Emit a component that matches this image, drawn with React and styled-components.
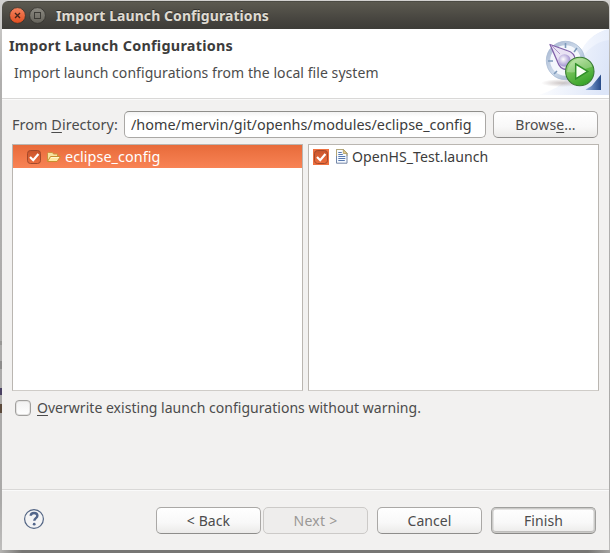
import React from 'react';
import styled, { createGlobalStyle } from 'styled-components';

const GlobalStyle = createGlobalStyle`
  * { box-sizing: border-box; }
  body {
    margin: 0;
    overflow: hidden;
    font: 14px "Noto Sans", sans-serif;
    color: #4c4c4c;
  }
  button, input { font: inherit; color: inherit; }
`;

const Desktop = styled.div`
  position: relative;
  width: 610px;
  height: 553px;
  padding: 1px 1px 3px 2px;
  overflow: hidden;
  background:
    linear-gradient(90deg, #b4b3b1 0, #777674 22px, #777674 588px, #a5a4a2) 0 550px / 610px 3px no-repeat,
    linear-gradient(#d3d2d0, #b0afae 80px, #aaa9a8 500px, #c0bfbe);
`;

/* Fragments of the window behind, visible past the dialog's left edge. */
const Behind = styled.div`
  position: absolute;
  left: 0;
  top: ${(p) => p.$y}px;
  width: 2px;
  height: ${(p) => p.$h}px;
  background: ${(p) => p.$color};
`;

const Dialog = styled.div`
  display: flex;
  flex-direction: column;
  height: 549px;
  background: #f2f1f0;
  border-radius: 6px 6px 0 0;
  overflow: hidden;
`;

const TitleBar = styled.header`
  display: flex;
  align-items: center;
  flex: none;
  height: 28px;
  padding-left: 7px;
  background: linear-gradient(#5c5a50, #45433e 70%, #3d3c38);
  border-top: 1px solid #4c4b44;
`;

const TitleText = styled.h1`
  margin: 0 0 0 7px;
  font-size: 14px;
  line-height: 26px;
  letter-spacing: 0.07px;
  color: #dfdbd2;
  text-shadow: 0 -1px 0 #33322e;
`;

const WindowButton = styled.button`
  display: flex;
  padding: 0;
  margin: 0 3px 0 0;
  border: 0;
  background: none;
`;

const Banner = styled.section`
  display: flex;
  justify-content: space-between;
  flex: none;
  height: 69px;
  background: #fff;
`;

const BannerText = styled.div`
  padding: 6px 0 0 7px;
`;

const BannerTitle = styled.h2`
  margin: 0;
  font-size: 14.4px;
  line-height: 22px;
  letter-spacing: 0.26px;
  color: #3c3c3c;
`;

const BannerMessage = styled.p`
  margin: 6px 0 0 5px;
  line-height: 20px;
  letter-spacing: 0.065px;
`;

const Separator = styled.div`
  flex: none;
  height: 2px;
  background: linear-gradient(#d9d8d7 50%, #fafafa 50%);
`;

const Content = styled.main`
  flex: 1;
  padding: 11px 10px 0;
`;

const DirectoryRow = styled.div`
  display: flex;
  height: 28px;
`;

const DirectoryLabel = styled.label`
  width: 112px;
  font-size: 14.4px;
  line-height: 28px;
  letter-spacing: 0.06px;
  white-space: nowrap;
`;

const Mnemonic = styled.span`
  text-decoration: underline;
  text-decoration-thickness: 1px;
  text-underline-offset: 2px;
  text-decoration-skip-ink: none;
`;

const DirectoryInput = styled.input`
  width: 362px;
  height: 27px;
  margin-right: 7px;
  padding: 0 6px;
  border: 1px solid #aaa8a5;
  border-top-color: #8f8e8b;
  border-radius: 5px;
  background: linear-gradient(#f3f3f3, #fff 5px);
  font-size: 14.4px;
  letter-spacing: 0.01px;
  color: #3c3c3c;
  outline: none;
`;

const Button = styled.button`
  flex: none;
  width: 105px;
  height: 27px;
  padding: 0;
  border: 1px solid #aaa8a6;
  border-bottom-color: #8e8d8b;
  border-radius: 5px;
  background: linear-gradient(#fff, #f8f8f8 60%, #ebeae9);
  line-height: 25px;
  letter-spacing: 0.08px;
  white-space: pre;

  &:disabled {
    color: #9a9896;
    border-color: #cccac8;
    background: #eeedec;
    letter-spacing: 0.25px;
  }
`;

const DefaultButton = styled(Button)`
  border-color: #a0a09e;
  border-bottom-color: #8a8987;
  box-shadow: inset 0 0 0 1.5px #cbcac8, inset 0 -2px 0 #b1b0ae;
`;

const Lists = styled.div`
  display: flex;
  gap: 5px;
  margin-top: 5px;
`;

const List = styled.div`
  width: 291px;
  height: 247px;
  border: 1px solid #bab6b1;
  border-bottom-color: #cfccc8;
  background: #fff;
`;

const ListItem = styled.div`
  display: flex;
  align-items: center;
  height: 23px;
  padding-left: ${(p) => p.$indent}px;
  color: ${(p) => (p.$selected ? '#fff' : '#3c3c3c')};
  background: ${(p) => (p.$selected ? 'linear-gradient(#e86b3a, #f88355)' : 'none')};
`;

const ItemIcon = styled.span`
  display: flex;
  justify-content: flex-end;
  flex: none;
  width: ${(p) => p.$width}px;
  margin-right: ${(p) => p.$gap}px;
`;

const ItemText = styled.span`
  font-size: ${(p) => p.$size}px;
  line-height: 23px;
  letter-spacing: 0.04px;
`;

const CheckBox = styled.span`
  display: flex;
  flex: none;
  width: 16px;
  height: 16px;
  background: ${(p) => (p.$tinted ? '#ef7140' : 'none')};
`;

const OverwriteRow = styled.label`
  display: flex;
  gap: 6px;
  height: 24px;
  margin-top: 5px;
  padding-left: 3px;
  line-height: 23px;
  letter-spacing: 0.025px;
  white-space: nowrap;
`;

const EmptyBox = styled.span`
  width: 16px;
  height: 16px;
  margin-top: 4px;
  border: 1px solid #a09f9d;
  border-radius: 4px;
  background: linear-gradient(#f1f1f1, #fff);
  box-shadow: inset 0 0 0 1px #e4e3e2;
`;

const Footer = styled.footer`
  display: flex;
  flex: none;
  height: 59px;
  padding: 16px 12px 0 21px;
`;

const HelpButton = styled.button`
  display: flex;
  width: 22px;
  height: 22px;
  margin: 1px 111px 0 0;
  padding: 0;
  border: 0;
  background: none;
`;

const NavButtons = styled.div`
  display: flex;
  gap: 2px;
  margin-right: 9px;
`;

const EndButtons = styled.div`
  display: flex;
  gap: 9px;
`;

function CloseIcon() {
  return (
    <svg width="17" height="17" viewBox="0 0 17 17">
      <defs>
        <linearGradient id="close" x2="0" y2="1">
          <stop stopColor="#f58560" />
          <stop offset="1" stopColor="#e14d1f" />
        </linearGradient>
      </defs>
      <circle cx="8.5" cy="8.5" r="7.9" fill="url(#close)" stroke="#34322d" strokeWidth=".8" />
      <path d="M6 6l5 5M11 6l-5 5" stroke="#46251a" strokeWidth="1.4" />
    </svg>
  );
}

function MaximizeIcon() {
  return (
    <svg width="17" height="17" viewBox="0 0 17 17">
      <defs>
        <linearGradient id="max" x2="0" y2="1">
          <stop stopColor="#8c8a82" />
          <stop offset="1" stopColor="#65635b" />
        </linearGradient>
      </defs>
      <circle cx="8.5" cy="8.5" r="7.9" fill="url(#max)" stroke="#35342f" strokeWidth=".8" />
      <rect x="5.5" y="5.5" width="6" height="6" fill="none" stroke="#3b3a35" />
    </svg>
  );
}

function CheckIcon() {
  return (
    <svg width="16" height="16" viewBox="0 0 16 16">
      <defs>
        <linearGradient id="check" x2="0" y2="1">
          <stop stopColor="#c8542c" />
          <stop offset="1" stopColor="#ed6d3d" />
        </linearGradient>
      </defs>
      <rect x="1.5" y="1.5" width="13" height="13" rx="3" fill="url(#check)" stroke="#a2492b" />
      <path d="M4 8l3.2 3.2L12.4 5" fill="none" stroke="#fff" strokeWidth="2.2" />
    </svg>
  );
}

function FolderIcon() {
  return (
    <svg width="16" height="16" viewBox="0 0 16 16">
      <path d="M1.5 12.500v-8l1-1h4l1 1.500h4v3" fill="#f7e3a0" stroke="#c9953c" />
      <path d="M1.5 12.500l3-5h10l-3.500 5z" fill="#ffe9a2" stroke="#c98d2f" strokeLinejoin="round" />
      <path d="M5 8.500h8" stroke="#fff7cf" />
    </svg>
  );
}

function FileIcon() {
  return (
    <svg width="12" height="15" viewBox="0 0 12 15">
      <path d="M.5.5h7l3.5 3.7v10H.5z" fill="#f5faff" stroke="#7486a6" />
      <path d="M.5 7V.5h7l3.5 3.7V7" fill="none" stroke="#b6a777" />
      <path d="M7.3.8v3.7H11z" fill="#e4cb8c" stroke="#b19c61" strokeWidth=".8" />
      <path d="M2.3 3.5h3.5M2.3 5.5h4.5M2.3 7.5h7M2.3 9.5h7M2.3 11.5h6.5" stroke="#5778af" />
    </svg>
  );
}

function HelpIcon() {
  return (
    <svg width="22" height="22" viewBox="0 0 22 22">
      <circle cx="11" cy="11" r="9.4" fill="#f4f4f5" stroke="#536584" strokeWidth="1.2" />
      <path
        d="M7.7 7.8C7.8 5.8 9.1 5 11 5c2 0 3.4 1 3.4 2.7 0 2.4-3.1 2.6-3.1 5.1"
        fill="none"
        stroke="#52658a"
        strokeWidth="2.4"
      />
      <circle cx="11.2" cy="16.2" r="1.4" fill="#52658a" />
    </svg>
  );
}

function BannerArt() {
  return (
    <svg width="75" height="66" viewBox="534 29 75 66">
      <defs>
        <linearGradient id="sky" x1="0" y1=".4" x2="1" y2=".6">
          <stop stopColor="#fff" />
          <stop offset="1" stopColor="#dce5f8" />
        </linearGradient>
        <linearGradient id="sweep" x1="0" x2="1">
          <stop stopColor="#f5f8fe" />
          <stop offset="1" stopColor="#e8eefb" />
        </linearGradient>
        <linearGradient id="ring" x2="1" y2="1">
          <stop stopColor="#a7b6d0" />
          <stop offset=".5" stopColor="#cedbeb" />
          <stop offset="1" stopColor="#8fa5c3" />
        </linearGradient>
        <radialGradient id="orb" cx=".4" cy=".4">
          <stop stopColor="#fff" />
          <stop offset="1" stopColor="#aea0d6" />
        </radialGradient>
        <linearGradient id="green" x2=".5" y2="1">
          <stop stopColor="#c1e7a9" />
          <stop offset=".5" stopColor="#6fbf53" />
          <stop offset="1" stopColor="#3aa62c" />
        </linearGradient>
        <linearGradient id="corner" x1="0" x2="1">
          <stop stopColor="#9bb6df" />
          <stop offset=".55" stopColor="#5578b1" />
          <stop offset="1" stopColor="#264a89" />
        </linearGradient>
        <radialGradient id="shade">
          <stop stopColor="#a99d9d" stopOpacity=".6" />
          <stop offset="1" stopColor="#a99d9d" stopOpacity="0" />
        </radialGradient>
      </defs>
      <path d="M609 29v66h-70c21-7 34-17 40-36 5-17 14-26 30-30z" fill="url(#sky)" />
      <path d="M609 29v11c-14 2-23 10-30 23 0-17 13-29 30-34z" fill="url(#sweep)" />
      <ellipse cx="562" cy="83" rx="21" ry="4" fill="url(#shade)" />
      <circle cx="565.5" cy="60.5" r="17.3" fill="#f4f7fc" stroke="url(#ring)" strokeWidth="4" />
      <circle cx="565.5" cy="60.5" r="19.2" fill="none" stroke="#a9bad2" strokeWidth=".7" />
      <path
        d="M565.5 43v5M577 48l-3 4M548 61h5M554 74l3-3M583 61h-4"
        stroke="#7e9abb"
        strokeWidth="1.6"
      />
      <path
        d="M550 44.5l17 6c5 1.5 8 4 8 9 0 6-4 10-9 10-4 0-7-3-9-9z"
        fill="#e9e3f4"
        stroke="#8060a8"
        strokeWidth="1.3"
        strokeLinejoin="round"
      />
      <path d="M551 45l9 9" stroke="#b197ca" />
      <circle cx="564.5" cy="60.5" r="6.2" fill="url(#orb)" />
      <path d="M601 74.5V90h-15.5c3-3 4-2 6.5-4.500z" fill="url(#corner)" />
      <circle cx="579.8" cy="71.5" r="14.2" fill="url(#green)" stroke="#397a35" strokeWidth="1.1" />
      <path d="M567 72c2-10 9-15 17-13 7 2 8 6 8 8-8 1-14 7-25 5z" fill="#fff" opacity=".25" />
      <path d="M575.7 64l12 7.4-12 7.4z" fill="#f8fff4" stroke="#319129" strokeWidth="1.5" />
    </svg>
  );
}

export default function App() {
  return (
    <>
      <GlobalStyle />
      <Desktop>
        <Behind $y={341} $h={4} $color="#989795" />
        <Behind $y={361} $h={8} $color="#8d8c8b" />
        <Behind $y={388} $h={7} $color="#4b4263" />
        <Behind $y={404} $h={9} $color="#5b4a3b" />
        <Dialog>
          <TitleBar>
            <WindowButton aria-label="Close"><CloseIcon /></WindowButton>
            <WindowButton aria-label="Maximize"><MaximizeIcon /></WindowButton>
            <TitleText>Import Launch Configurations</TitleText>
          </TitleBar>
          <Banner>
            <BannerText>
              <BannerTitle>Import Launch Configurations</BannerTitle>
              <BannerMessage>Import launch configurations from the local file system</BannerMessage>
            </BannerText>
            <BannerArt />
          </Banner>
          <Separator />
          <Content>
            <DirectoryRow>
              <DirectoryLabel htmlFor="directory">From <Mnemonic>D</Mnemonic>irectory:</DirectoryLabel>
              <DirectoryInput id="directory" readOnly value="/home/mervin/git/openhs/modules/eclipse_config" />
              <Button>Brows<Mnemonic>e</Mnemonic>...</Button>
            </DirectoryRow>
            <Lists>
              <List>
                <ListItem $selected $indent={13}>
                  <CheckBox><CheckIcon /></CheckBox>
                  <ItemIcon $width={20} $gap={3}><FolderIcon /></ItemIcon>
                  <ItemText $size={14.4}>eclipse_config</ItemText>
                </ListItem>
              </List>
              <List>
                <ListItem $indent={4}>
                  <CheckBox $tinted><CheckIcon /></CheckBox>
                  <ItemIcon $width={19} $gap={4}><FileIcon /></ItemIcon>
                  <ItemText $size={14.1}>OpenHS_Test.launch</ItemText>
                </ListItem>
              </List>
            </Lists>
            <OverwriteRow>
              <EmptyBox />
              <span><Mnemonic>O</Mnemonic>verwrite existing launch configurations without warning.</span>
            </OverwriteRow>
          </Content>
          <Separator />
          <Footer>
            <HelpButton aria-label="Help"><HelpIcon /></HelpButton>
            <NavButtons>
              <Button>{'< Back'}</Button>
              <Button disabled>{'Next >'}</Button>
            </NavButtons>
            <EndButtons>
              <Button>Cancel</Button>
              <DefaultButton>Finish</DefaultButton>
            </EndButtons>
          </Footer>
        </Dialog>
      </Desktop>
    </>
  );
}
